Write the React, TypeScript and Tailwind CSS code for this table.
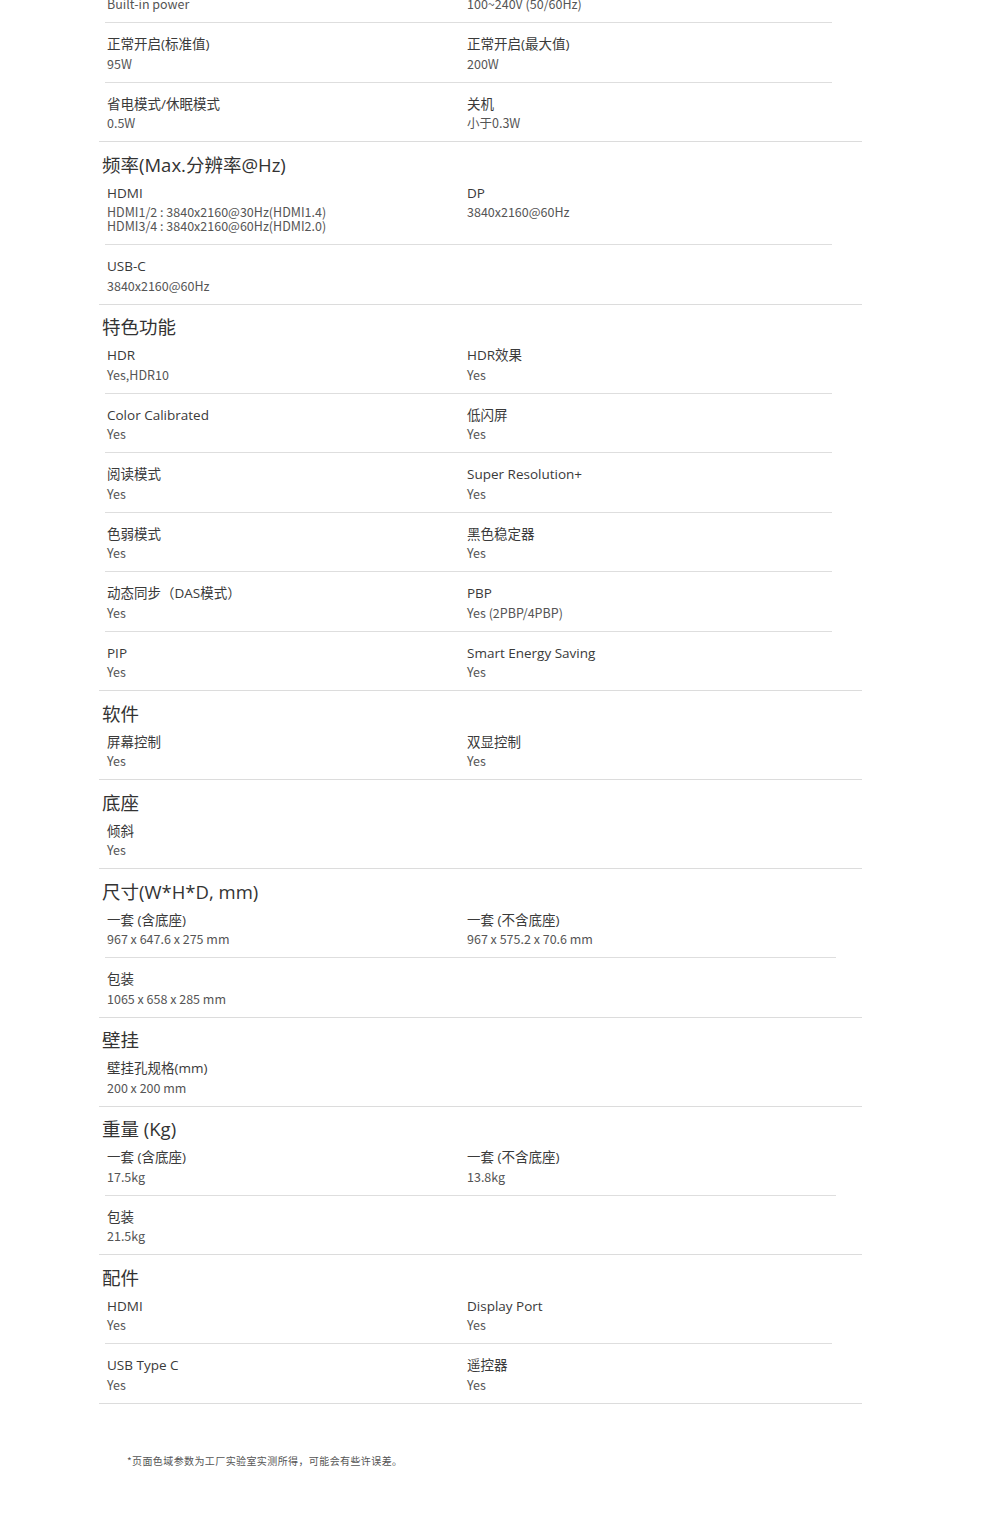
import React from 'react';

type Cell = { label: string; value: string[] };
type Row = Cell[];
type Section = { title: string; rows: Row[]; wide?: boolean };

const sections: Section[] = [
  {
    title: '频率(Max.分辨率@Hz)',
    rows: [
      [
        { label: 'HDMI', value: ['HDMI1/2 : 3840x2160@30Hz(HDMI1.4)', 'HDMI3/4 : 3840x2160@60Hz(HDMI2.0)'] },
        { label: 'DP', value: ['3840x2160@60Hz'] },
      ],
      [{ label: 'USB-C', value: ['3840x2160@60Hz'] }],
    ],
  },
  {
    title: '特色功能',
    rows: [
      [
        { label: 'HDR', value: ['Yes,HDR10'] },
        { label: 'HDR效果', value: ['Yes'] },
      ],
      [
        { label: 'Color Calibrated', value: ['Yes'] },
        { label: '低闪屏', value: ['Yes'] },
      ],
      [
        { label: '阅读模式', value: ['Yes'] },
        { label: 'Super Resolution+', value: ['Yes'] },
      ],
      [
        { label: '色弱模式', value: ['Yes'] },
        { label: '黑色稳定器', value: ['Yes'] },
      ],
      [
        { label: '动态同步（DAS模式）', value: ['Yes'] },
        { label: 'PBP', value: ['Yes (2PBP/4PBP)'] },
      ],
      [
        { label: 'PIP', value: ['Yes'] },
        { label: 'Smart Energy Saving', value: ['Yes'] },
      ],
    ],
  },
  {
    title: '软件',
    rows: [
      [
        { label: '屏幕控制', value: ['Yes'] },
        { label: '双显控制', value: ['Yes'] },
      ],
    ],
  },
  {
    title: '底座',
    rows: [[{ label: '倾斜', value: ['Yes'] }]],
  },
  {
    title: '尺寸(W*H*D, mm)',
    wide: true,
    rows: [
      [
        { label: '一套 (含底座)', value: ['967 x 647.6 x 275 mm'] },
        { label: '一套 (不含底座)', value: ['967 x 575.2 x 70.6 mm'] },
      ],
      [{ label: '包装', value: ['1065 x 658 x 285 mm'] }],
    ],
  },
  {
    title: '壁挂',
    rows: [[{ label: '壁挂孔规格(mm)', value: ['200 x 200 mm'] }]],
  },
  {
    title: '重量 (Kg)',
    wide: true,
    rows: [
      [
        { label: '一套 (含底座)', value: ['17.5kg'] },
        { label: '一套 (不含底座)', value: ['13.8kg'] },
      ],
      [{ label: '包装', value: ['21.5kg'] }],
    ],
  },
  {
    title: '配件',
    rows: [
      [
        { label: 'HDMI', value: ['Yes'] },
        { label: 'Display Port', value: ['Yes'] },
      ],
      [
        { label: 'USB Type C', value: ['Yes'] },
        { label: '遥控器', value: ['Yes'] },
      ],
    ],
  },
];

const labelFont = "font-['Open_Sans','Noto_Sans_CJK_SC',sans-serif]";
const valueFont = "font-['Noto_Sans_CJK_SC','Open_Sans',sans-serif]";

const SpecCell: React.FC<{ cell?: Cell; first?: boolean }> = ({ cell, first }) => (
  <div className={first ? 'w-[360px] shrink-0' : 'flex-1'}>
    {cell && (
      <>
        <div className={`${labelFont} text-[13.5px] leading-5 text-[#3a3a3a]`}>{cell.label}</div>
        <div className="mt-[2.5px]">
          {cell.value.map((v) => (
            <div key={v} className={`${valueFont} text-[12.5px] leading-[14px] text-[#555]`}>
              {v}
            </div>
          ))}
        </div>
      </>
    )}
  </div>
);

const SpecRow: React.FC<{ row: Row; first: boolean; last: boolean; wide?: boolean }> = ({ row, first, last, wide }) => (
  <div
    className={`ml-[6px] flex pl-[2px] pb-[11px] ${first ? 'pt-[6px]' : 'pt-[11px]'} ${
      wide ? 'w-[731px]' : 'w-[727px]'
    } ${last ? '' : 'border-b border-[#dedede]'}`}
  >
    <SpecCell cell={row[0]} first />
    <SpecCell cell={row[1]} />
  </div>
);

export default function App() {
  return (
    <div className="min-h-[1513px] w-[990px] bg-white">
      <div className="ml-[99px] w-[763px]">
        {/* tail of the power section */}
        <div className="border-b border-[#dcdcdc]">
          <div className="ml-[6px] flex w-[727px] border-b border-[#dedede] pb-[11px] pl-[2px]">
            <div className={`${valueFont} -mt-[3px] w-[360px] shrink-0 text-[12.5px] leading-[14px] text-[#555]`}>
              Built-in power
            </div>
            <div className={`${valueFont} -mt-[3px] flex-1 text-[12.5px] leading-[14px] text-[#555]`}>
              100~240V (50/60Hz)
            </div>
          </div>
          <div className="ml-[6px] flex w-[727px] border-b border-[#dedede] pb-[11px] pl-[2px] pt-[11px]">
            <SpecCell cell={{ label: '正常开启(标准值)', value: ['95W'] }} first />
            <SpecCell cell={{ label: '正常开启(最大值)', value: ['200W'] }} />
          </div>
          <div className="ml-[6px] flex w-[727px] pb-[11px] pl-[2px] pt-[11px]">
            <SpecCell cell={{ label: '省电模式/休眠模式', value: ['0.5W'] }} first />
            <SpecCell cell={{ label: '关机', value: ['小于0.3W'] }} />
          </div>
        </div>

        {sections.map((s) => (
          <div key={s.title} className="border-b border-[#dcdcdc]">
            <h3 className={`${labelFont} pl-[3px] pt-[10.5px] text-[18.5px] leading-6 font-normal text-[#333]`}>
              {s.title}
            </h3>
            {s.rows.map((r, i) => (
              <SpecRow key={i} row={r} first={i === 0} last={i === s.rows.length - 1} wide={s.wide} />
            ))}
          </div>
        ))}
      </div>

      <p className="mt-[50px] pl-[127px] font-['Noto_Sans_CJK_SC',sans-serif] text-[10px] leading-[14px] tracking-[0.4px] text-[#555]">
        *页面色域参数为工厂实验室实测所得，可能会有些许误差。
      </p>
    </div>
  );
}
